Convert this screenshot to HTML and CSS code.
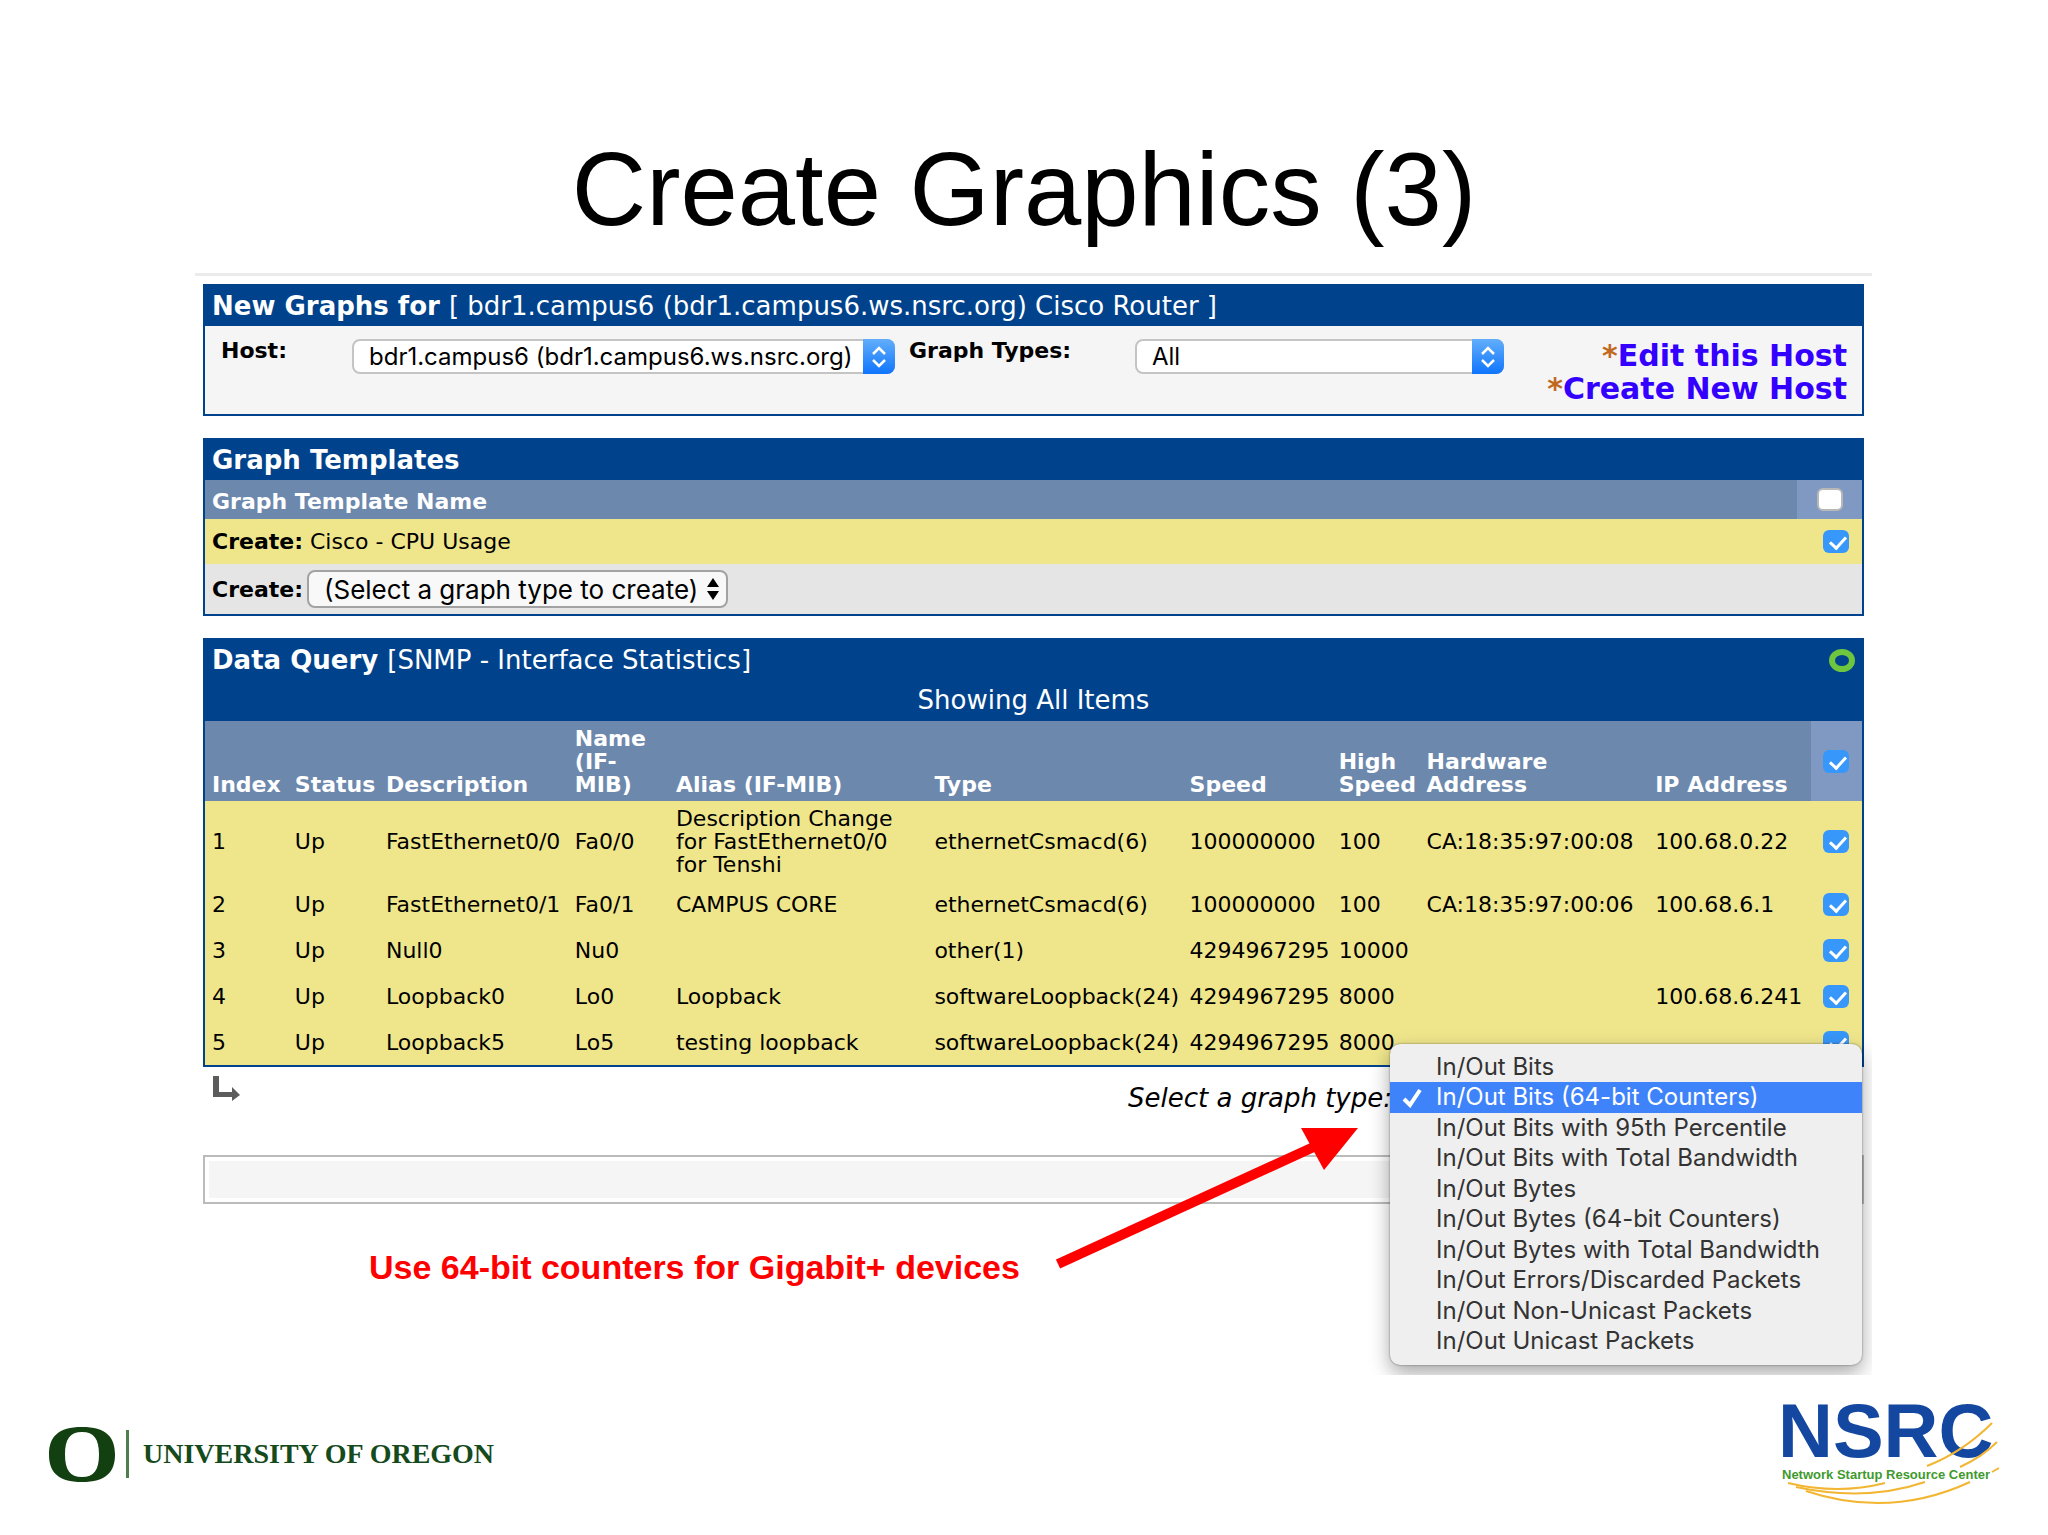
FILE: index.html
```html
<!DOCTYPE html>
<html lang="en">
<head>
  <meta charset="UTF-8" />
  <meta name="viewport" content="width=device-width, initial-scale=1" />
  <title>Create Graphics (3)</title>
  <link rel="stylesheet" href="styles.css">
</head>
<body>
  <h1>Create Graphics (3)</h1>

  <main class="screen">
    <section class="panel">
      <h2 class="panel-title">New Graphs for <span>[ bdr1.campus6 (bdr1.campus6.ws.nsrc.org) Cisco Router ]</span></h2>
      <div class="filters">
        <label class="host-label" for="host">Host:</label>
        <div class="select-box host-box">
          <select id="host"><option>bdr1.campus6 (bdr1.campus6.ws.nsrc.org)</option></select>
          <svg class="cap" viewBox="0 0 32 35"><path d="M10 15l6-6 6 6M10 21l6 6 6-6" fill="none" stroke="#fff" stroke-width="2.500" /></svg>
        </div>
        <label class="types-label" for="types">Graph Types:</label>
        <div class="select-box types-box">
          <select id="types"><option>All</option></select>
          <svg class="cap" viewBox="0 0 32 35"><path d="M10 15l6-6 6 6M10 21l6 6 6-6" fill="none" stroke="#fff" stroke-width="2.500" /></svg>
        </div>
        <div class="links">
          <div><span>*</span><a href="#">Edit this Host</a></div>
          <div><span>*</span><a href="#">Create New Host</a></div>
        </div>
      </div>
    </section>

    <section class="panel">
      <h2 class="panel-title">Graph Templates</h2>
      <div class="template-head">
        <span>Graph Template Name</span>
        <div class="all-cell"><input type="checkbox" aria-label="Select all templates"></div>
      </div>
      <div class="template-row">
        <label for="cpu"><b>Create:</b> Cisco - CPU Usage</label>
        <input type="checkbox" id="cpu" checked>
      </div>
      <div class="create-row">
        <label for="create"><b>Create:</b></label>
        <div class="create-box">
          <select id="create"><option>(Select a graph type to create)</option></select>
          <svg class="arrows" viewBox="0 0 12 22"><path d="M0 9L6 0l6 9zM0 13l6 9 6-9z" /></svg>
        </div>
      </div>
    </section>

    <section class="panel">
      <div class="query-title">
        <h2 class="panel-title">Data Query <span>[SNMP - Interface Statistics]</span></h2>
        <button class="reload" aria-label="Reload"></button>
      </div>
      <div class="showing">Showing All Items</div>
      <table>
        <colgroup>
          <col class="c-index"><col class="c-status"><col class="c-desc"><col class="c-name"><col class="c-alias"><col class="c-type">
          <col class="c-speed"><col class="c-high"><col class="c-hw"><col class="c-ip"><col class="c-check">
        </colgroup>
        <thead>
          <tr>
            <th>Index</th><th>Status</th><th>Description</th><th>Name (IF-MIB)</th><th>Alias (IF-MIB)</th><th>Type</th>
            <th>Speed</th><th>High Speed</th><th>Hardware<br>Address</th><th>IP Address</th>
            <th class="check"><input type="checkbox" aria-label="Select all" checked></th>
          </tr>
        </thead>
        <tbody>
          <tr>
            <td>1</td><td>Up</td><td>FastEthernet0/0</td><td>Fa0/0</td><td>Description Change<br>for FastEthernet0/0<br>for Tenshi</td><td>ethernetCsmacd(6)</td>
            <td>100000000</td><td>100</td><td>CA:18:35:97:00:08</td><td>100.68.0.22</td>
            <td class="check"><input type="checkbox" aria-label="Row 1" checked></td>
          </tr>
          <tr>
            <td>2</td><td>Up</td><td>FastEthernet0/1</td><td>Fa0/1</td><td>CAMPUS CORE</td><td>ethernetCsmacd(6)</td>
            <td>100000000</td><td>100</td><td>CA:18:35:97:00:06</td><td>100.68.6.1</td>
            <td class="check"><input type="checkbox" aria-label="Row 2" checked></td>
          </tr>
          <tr>
            <td>3</td><td>Up</td><td>Null0</td><td>Nu0</td><td></td><td>other(1)</td>
            <td>4294967295</td><td>10000</td><td></td><td></td>
            <td class="check"><input type="checkbox" aria-label="Row 3" checked></td>
          </tr>
          <tr>
            <td>4</td><td>Up</td><td>Loopback0</td><td>Lo0</td><td>Loopback</td><td>softwareLoopback(24)</td>
            <td>4294967295</td><td>8000</td><td></td><td>100.68.6.241</td>
            <td class="check"><input type="checkbox" aria-label="Row 4" checked></td>
          </tr>
          <tr>
            <td>5</td><td>Up</td><td>Loopback5</td><td>Lo5</td><td>testing loopback</td><td>softwareLoopback(24)</td>
            <td>4294967295</td><td>8000</td><td></td><td></td>
            <td class="check"><input type="checkbox" aria-label="Row 5" checked></td>
          </tr>
        </tbody>
      </table>
    </section>

    <div class="query-foot">
      <svg class="turn" viewBox="0 0 27 25"><path d="M0 0h6v16h13v-5l8 8-8 6v-4H0z" fill="#5c5c5c" /></svg>
      <label for="graph-type">Select a graph type:</label>
      <div class="graph-type">
        <select id="graph-type"></select>
        <ul class="menu">
          <li><button>In/Out Bits</button></li>
          <li><button class="on"><svg viewBox="0 0 22 20"><path d="M3 11l6 6L19 2" fill="none" stroke="#fff" stroke-width="4" /></svg>In/Out Bits (64-bit Counters)</button></li>
          <li><button>In/Out Bits with 95th Percentile</button></li>
          <li><button>In/Out Bits with Total Bandwidth</button></li>
          <li><button>In/Out Bytes</button></li>
          <li><button>In/Out Bytes (64-bit Counters)</button></li>
          <li><button>In/Out Bytes with Total Bandwidth</button></li>
          <li><button>In/Out Errors/Discarded Packets</button></li>
          <li><button>In/Out Non-Unicast Packets</button></li>
          <li><button>In/Out Unicast Packets</button></li>
        </ul>
      </div>
    </div>

    <div class="bar"></div>

    <div class="note">
      <p>Use 64-bit counters for Gigabit+ devices</p>
      <svg class="pointer" viewBox="0 0 302 144"><path d="M2 137L262 18" stroke="#f00" stroke-width="10" /><path d="M245 1h57l-34 42z" fill="#f00" /></svg>
    </div>
  </main>

  <footer>
    <div class="oregon">
      <svg viewBox="0 0 66 55"><path fill-rule="evenodd" d="M33 0C57 0 66 10 66 27.500S57 55 33 55 0 45 0 27.500 9 0 33 0zM33 5C21 5 16 12 16 27.500S21 50 33 50 50 43 50 27.500 45 5 33 5z" fill="#124010" /></svg>
      <span>UNIVERSITY OF OREGON</span>
    </div>
    <div class="nsrc">
      <svg viewBox="0 0 240 94">
        <g fill="none" stroke="#f2b632" stroke-width="2">
          <path d="M28 67q50 12 97 0" />
          <path d="M36 71q70 15 129-5" />
          <path d="M46 75q84 28 164-9" />
          <path d="M167 50q36-14 65-43" />
          <path d="M200 51q22-10 37-25M232 56l7-4" />
        </g>
      </svg>
      <strong>NSRC</strong>
      <small>Network Startup Resource Center</small>
    </div>
  </footer>
</body>
</html>
```

FILE: styles.css
```css
* {
  box-sizing: border-box;
}

body {
  margin: 0;
  background: #fff;
  color: #000;
  font-family: "DejaVu Sans", Verdana, sans-serif;
  font-size: 22px;
  line-height: 23px;
}

h1 {
  margin: 0;
  padding: 130px 0 23px;
  font-family: "Liberation Sans", Arial, sans-serif;
  font-size: 103px;
  font-weight: normal;
  line-height: 120px;
  text-align: center;
}

.screen {
  position: relative;
  margin: 0 176px 0 195px;
  padding: 8px 8px 86px;
  border-top: 3px solid #ebebeb;
  overflow: hidden;
}

.panel {
  margin-bottom: 22px;
  border: 2px solid #00438c;
}

.panel-title {
  margin: 0;
  padding: 0 7px;
  background: #00438c;
  color: #fff;
  font-size: 26px;
  line-height: 40px;
}

.panel-title span {
  font-weight: normal;
}

/* host and type filters */
.filters {
  display: flex;
  align-items: flex-start;
  height: 88px;
  padding: 13px 15px 0 16px;
  background: #f5f5f5;
  font-weight: bold;
}

.host-label {
  width: 131px;
}

.types-label {
  width: 226px;
  margin-left: 14px;
}

.select-box,
.create-box {
  position: relative;
}

.host-box {
  width: 543px;
}

.types-box {
  width: 369px;
}

select {
  appearance: none;
  width: 100%;
  height: 35px;
  padding: 0 15px;
  border: 2px solid #c4c4c4;
  border-radius: 8px;
  background: #fff;
  color: #000;
  font-family: Inter, sans-serif;
  font-size: 24px;
}

.cap {
  position: absolute;
  top: 0;
  right: 0;
  width: 32px;
  height: 35px;
  border-radius: 0 8px 8px 0;
  background: linear-gradient(#62aefb, #0f75fd);
  pointer-events: none;
}

.links {
  margin-left: auto;
  font-size: 30px;
  line-height: 33px;
  text-align: right;
}

.links a {
  color: #30f;
  text-decoration: none;
}

.links span {
  color: #c1691f;
}

/* check boxes */
input[type="checkbox"] {
  appearance: none;
  display: block;
  flex: none;
  width: 26px;
  height: 23px;
  margin: 0;
  border: 2px solid #b8b8b8;
  border-radius: 6px;
  background: #fff;
}

input[type="checkbox"]:checked {
  position: relative;
  border: 0;
  background: #3897fa;
}

input[type="checkbox"]:checked::after {
  content: "";
  position: absolute;
  left: 10px;
  top: 3px;
  width: 7px;
  height: 13px;
  border: solid #fff;
  border-width: 0 3px 3px 0;
  transform: rotate(42deg);
}

/* graph templates */
.template-head {
  display: flex;
  justify-content: space-between;
  height: 39px;
  padding-left: 7px;
  background: #6d88ad;
  color: #fff;
  font-weight: bold;
  line-height: 43px;
}

.all-cell {
  display: flex;
  align-items: center;
  width: 65px;
  padding-left: 20px;
  background: #8099c2;
}

.template-row {
  display: flex;
  align-items: center;
  justify-content: space-between;
  height: 45px;
  padding: 0 13px 0 7px;
  background: #efe68c;
}

.create-row {
  display: flex;
  align-items: center;
  gap: 4px;
  height: 50px;
  padding: 0 7px;
  background: #e5e5e5;
}

.create-box {
  width: 421px;
}

.create-box select {
  height: 38px;
  border-color: #a2a2a2;
  background: #f8f8f8;
  font-size: 26px;
}

.arrows {
  position: absolute;
  top: 8px;
  right: 9px;
  width: 12px;
  height: 22px;
  pointer-events: none;
}

/* data query */
.query-title {
  display: flex;
  justify-content: space-between;
  align-items: center;
  padding-right: 7px;
  background: #00438c;
}

.reload {
  width: 26px;
  height: 23px;
  padding: 0;
  border: 6px solid #6ec63f;
  border-radius: 50%;
  background: none;
}

.showing {
  background: #00438c;
  color: #fff;
  font-size: 26px;
  line-height: 41px;
  text-align: center;
}

table {
  width: 100%;
  border-collapse: collapse;
  table-layout: fixed;
}

.c-index { width: 5%; }
.c-status { width: 5.5%; }
.c-desc { width: 11.4%; }
.c-name { width: 6.1%; }
.c-alias { width: 15.6%; }
.c-type { width: 15.4%; }
.c-speed { width: 9%; }
.c-high { width: 5.3%; }
.c-hw { width: 13.8%; }
.c-ip { width: 9.8%; }
.c-check { width: 3.1%; }

th {
  padding: 6px 0 5px 7px;
  background: #6d88ad;
  color: #fff;
  text-align: left;
  vertical-align: bottom;
}

td {
  height: 46px;
  padding: 6px 0 5px 7px;
  background: #efe68c;
  white-space: nowrap;
}

.check {
  padding: 0 0 0 12px;
  vertical-align: middle;
}

th.check {
  background: #8099c2;
}

.query-foot {
  display: flex;
  align-items: center;
  height: 62px;
  margin-top: -22px;
  padding: 0 2px 0 10px;
}

.query-foot label {
  font-size: 26px;
  font-style: italic;
}

.turn {
  width: 27px;
  height: 25px;
  margin: 0 auto 20px 0;
}

.graph-type {
  position: relative;
  width: 470px;
}

.menu {
  position: absolute;
  left: -2px;
  top: -37px;
  z-index: 2;
  display: grid;
  width: 472px;
  height: 321px;
  margin: 0;
  padding: 8px 0;
  border-radius: 10px;
  background: #efefef;
  box-shadow: 0 8px 20px rgba(0, 0, 0, 0.35), 0 0 2px rgba(0, 0, 0, 0.5);
  list-style: none;
}

.menu li {
  display: grid;
}

.menu button {
  position: relative;
  padding: 0 0 0 46px;
  border: 0;
  background: none;
  color: #333;
  font-family: Inter, sans-serif;
  font-size: 24px;
  line-height: 30px;
  text-align: left;
}

.menu .on {
  background: #3f83fb;
  color: #fff;
}

.menu svg {
  position: absolute;
  left: 11px;
  top: 6px;
  width: 22px;
  height: 20px;
}

.bar {
  height: 49px;
  margin-top: 26px;
  padding: 4px;
  border: 2px solid #bbb;
  background: #f5f5f5 content-box;
}

/* red callout */
.note {
  position: relative;
  padding: 45px 0 4px 166px;
  color: #f00;
  font-family: "Liberation Sans", Arial, sans-serif;
  font-size: 34px;
  font-weight: bold;
  line-height: 36px;
}

.note p {
  margin: 0;
}

.pointer {
  position: absolute;
  left: 853px;
  top: -77px;
  width: 302px;
  height: 144px;
}

footer {
  display: flex;
  justify-content: space-between;
  padding: 19px 50px 0 49px;
}

.oregon {
  display: flex;
  align-items: center;
  height: 120px;
  color: #154a1c;
  font-family: "Liberation Serif", "Times New Roman", serif;
  font-size: 28px;
  font-weight: bold;
}

.oregon svg {
  width: 66px;
  height: 55px;
}

.oregon span {
  margin-left: 11px;
  padding-left: 14px;
  border-left: 3px solid #4f7d4f;
  line-height: 48px;
}

.nsrc {
  position: relative;
  width: 220px;
  font-family: "Liberation Sans", Arial, sans-serif;
}

.nsrc strong,
.nsrc small {
  display: block;
}

.nsrc strong {
  color: #1447a0;
  font-size: 76px;
  line-height: 74px;
}

.nsrc small {
  padding-left: 4px;
  color: #3f9a2e;
  font-size: 13px;
  font-weight: bold;
  line-height: 14px;
}

.nsrc svg {
  position: absolute;
  left: -18px;
  top: 22px;
  width: 240px;
  height: 94px;
}
```
